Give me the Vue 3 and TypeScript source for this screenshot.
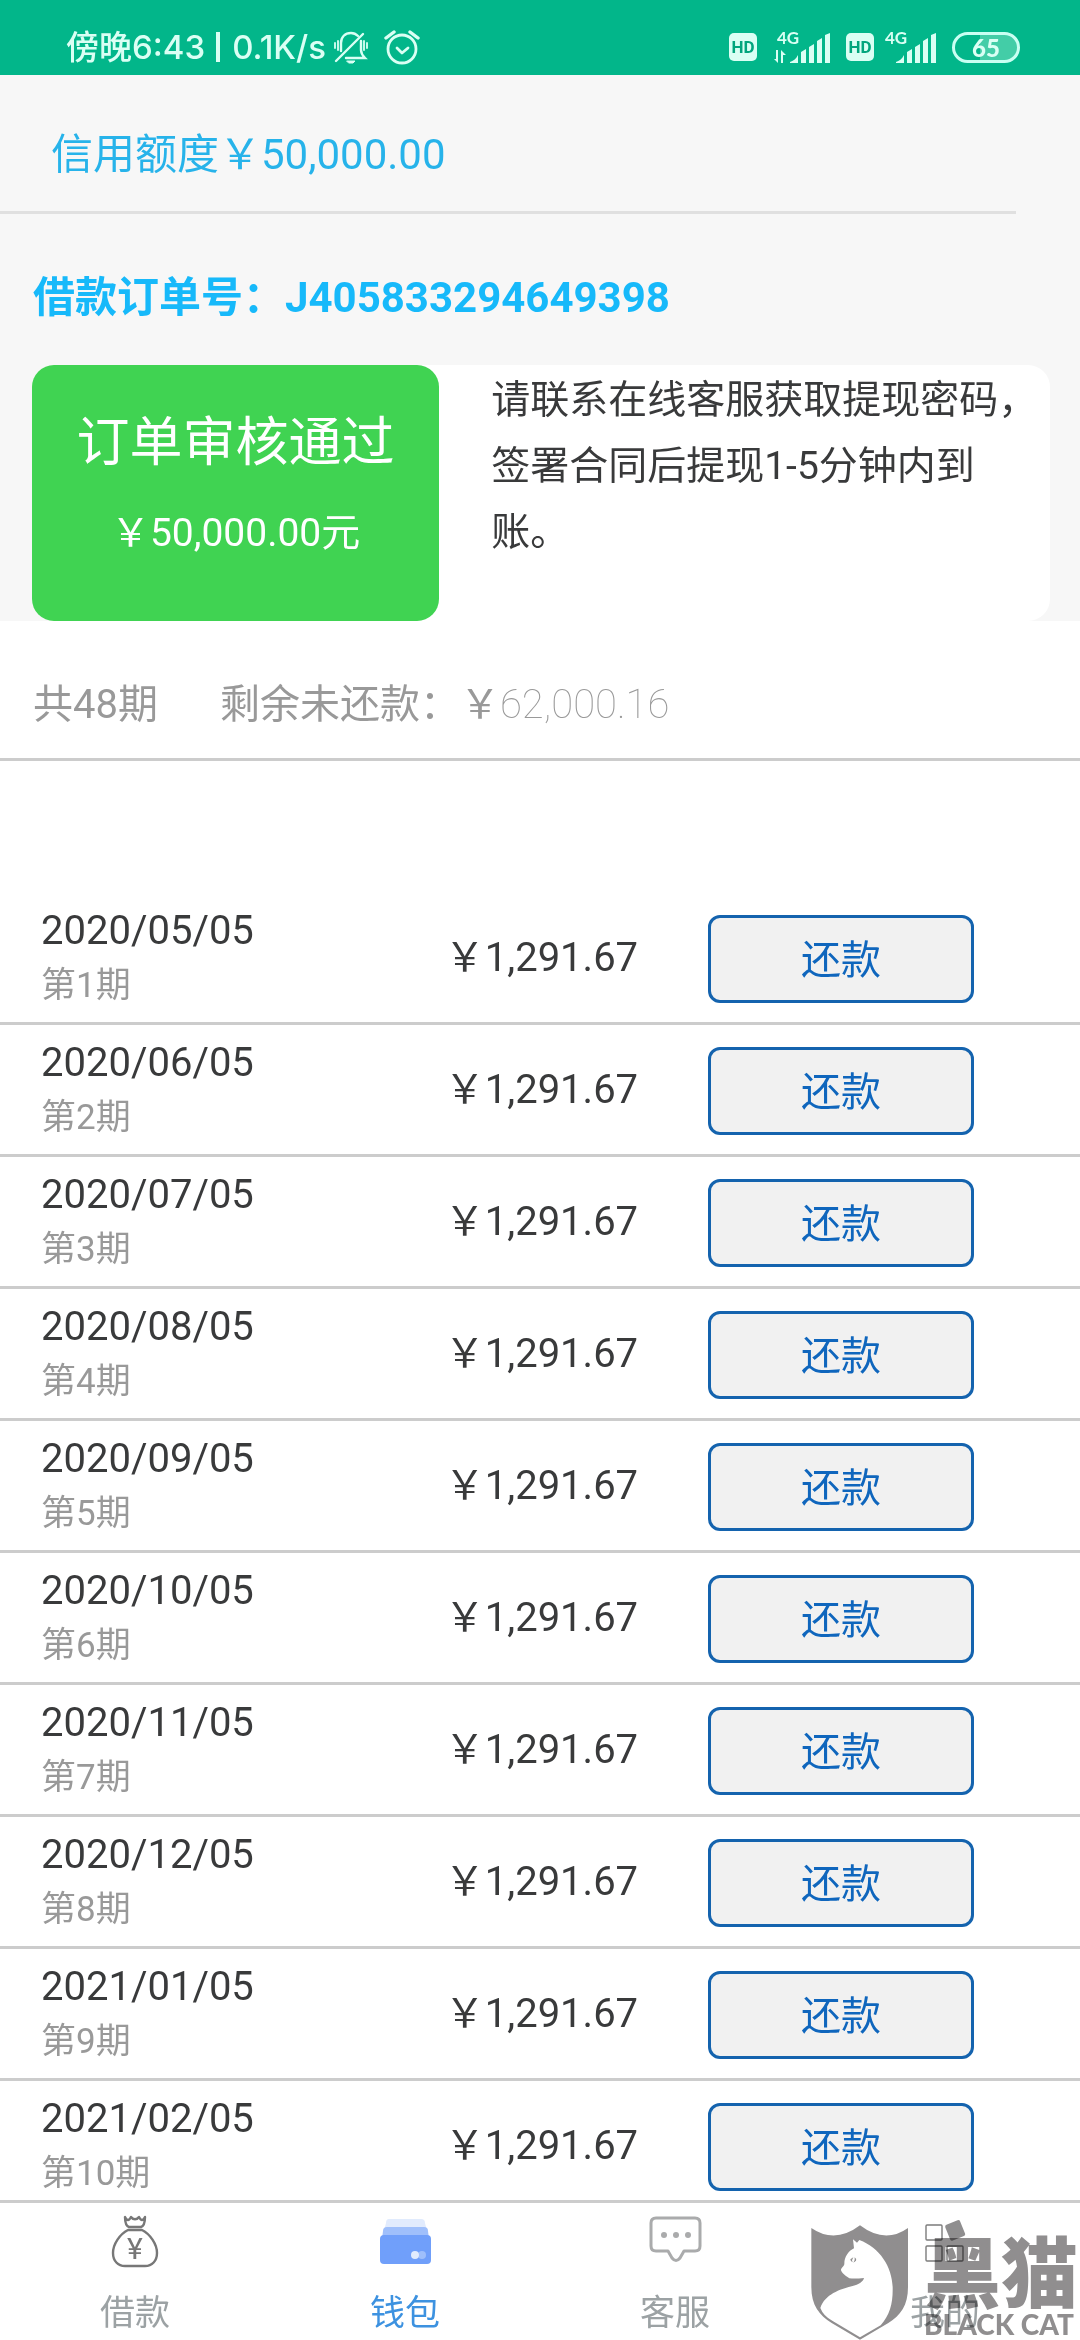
<script setup lang="ts">
interface Instalment {
  date: string
  period: number
}

interface Tab {
  id: string
  label: string
  active?: boolean
}

const amount = '1,291.67'

const instalments: Instalment[] = Array.from({ length: 10 }, (_, i) => {
  const month = 5 + i
  const year = 2020 + Math.floor((month - 1) / 12)
  const mm = String(((month - 1) % 12) + 1).padStart(2, '0')
  return { date: `${year}/${mm}/05`, period: i + 1 }
})

const tabs: Tab[] = [
  { id: 'loan', label: '借款' },
  { id: 'wallet', label: '钱包', active: true },
  { id: 'service', label: '客服' },
  { id: 'mine', label: '我的' },
]
</script>

<template>
  <div class="app">
    <header class="status">
      <div class="status-left">
        <span>傍晚6:43</span>
        <i class="bar"></i>
        <span class="speed">0.1K/s</span>
        <svg class="bell" width="36" height="36" viewBox="0 0 36 36" fill="none" stroke="currentColor" stroke-width="2.4" stroke-linecap="round">
          <path d="M3 32 30 5" />
          <path d="M8 22V14C8 8 12 4 18 4c3 0 5 1 7 3" />
          <path d="M28 12v9c0 3 2 6 4 8H13" />
          <path d="M14 32h8l-2 2h-4z" fill="currentColor" stroke-width="1" />
          <path d="M2 14v5M5 12v9M31 12v9M34 14v5" stroke-width="1.8" />
        </svg>
        <svg width="36" height="36" viewBox="0 0 36 36" fill="none" stroke="currentColor" stroke-width="2.8" stroke-linecap="round" stroke-linejoin="round">
          <circle cx="18" cy="20" r="14" />
          <path d="M2 9 10 3M34 9 26 3" stroke-width="3.4" />
          <path d="m13 19 5 5 6-5" />
        </svg>
      </div>
      <div class="status-right">
        <div class="sim">
          <span class="hd">HD</span>
          <svg width="57" height="42" viewBox="0 -4 57 42" fill="currentColor">
            <text class="net" x="4" y="14">4G</text>
            <path d="M5 20v13L1 29h2V20zM8 33V20l5 5h-3v8z" />
            <path d="M17 32c3-1 6-3 8-7v8h-8zM28 22l5-3v14h-5zM36 17l5-3v19h-5zM44 11l5-3v25h-5zM52 5l5-2v30h-5z" />
          </svg>
        </div>
        <div class="sim tight">
          <span class="hd">HD</span>
          <svg width="52" height="42" viewBox="5 -4 52 42" fill="currentColor">
            <text class="net" x="6" y="14">4G</text>
            <path d="M17 32c3-1 6-3 8-7v8h-8zM28 22l5-3v14h-5zM36 17l5-3v19h-5zM44 11l5-3v25h-5zM52 5l5-2v30h-5z" />
          </svg>
        </div>
        <span class="battery">65</span>
      </div>
    </header>

    <section class="credit">
      <p class="limit">信用额度￥50,000.00</p>
      <h1 class="order">借款订单号：J405833294649398</h1>
      <div class="card">
        <div class="result">
          <strong class="result-title">订单审核通过</strong>
          <span class="result-sum">￥50,000.00元</span>
        </div>
        <p class="note">请联系在线客服获取提现密码，签署合同后提现1-5分钟内到账。</p>
      </div>
    </section>

    <section class="summary">
      <span>共48期</span>
      <span>剩余未还款：￥<span class="thin">62,000.16</span></span>
    </section>

    <main class="list">
      <table class="plan">
        <colgroup>
          <col class="col-date" />
          <col class="col-sum" />
          <col />
        </colgroup>
        <tbody>
          <tr v-for="item in instalments" :key="item.period">
            <td class="when">
              <div class="date">{{ item.date }}</div>
              <div class="period">第{{ item.period }}期</div>
            </td>
            <td class="sum">￥{{ amount }}</td>
            <td><button type="button" class="repay">还款</button></td>
          </tr>
        </tbody>
      </table>
    </main>

    <nav class="tabs">
      <a v-for="tab in tabs" :key="tab.id" href="#" class="tab" :class="{ active: tab.active }">
        <svg v-if="tab.id === 'loan'" width="56" height="56" viewBox="0 0 56 56" fill="none" stroke="#777" stroke-width="2.4" stroke-linejoin="round">
          <path d="M18 4c0 4 1 9 4 10h12c3-1 4-6 4-10-2 4-4 4-6 0-2 3-6 3-8 0-2 4-4 4-6 0z" />
          <path d="M21 17h14c8 4 15 14 15 23 0 8-5 13-12 13H18C11 53 6 48 6 40 6 31 13 21 21 17z" />
          <text class="yen" x="28" y="46" text-anchor="middle">¥</text>
        </svg>
        <svg v-else-if="tab.id === 'wallet'" width="56" height="56" viewBox="0 0 56 56">
          <path d="M12 6h32q4 0 4 4l2 8H7l2-8q0-4 3-4z" fill="#e1ebfd" />
          <path d="M10 14h37q4 0 4 4l1 8H5l1-8q0-4 4-4z" fill="#9fbffb" />
          <rect x="3" y="22" width="51" height="29" rx="4" fill="#709ffa" />
          <circle cx="45" cy="42" r="4" fill="#9fbffb" />
          <circle cx="38" cy="42" r="4" fill="#e1ebfd" />
        </svg>
        <svg v-else-if="tab.id === 'service'" width="56" height="56" viewBox="0 0 56 56" fill="none" stroke="#aaabac" stroke-width="3" stroke-linejoin="round">
          <path d="M9 5h39q5 0 5 5v23q0 5-5 5H37l-4 7q-4 5-8 0l-4-7H9q-5 0-5-5V10q0-5 5-5z" />
          <g fill="#aaabac" stroke="none">
            <circle cx="17" cy="22" r="3" />
            <circle cx="29" cy="22" r="3" />
            <circle cx="41" cy="22" r="3" />
          </g>
        </svg>
        <svg v-else width="56" height="56" viewBox="0 0 56 56" fill="none" stroke="#7c7c7c" stroke-width="1.4">
          <rect x="9" y="12" width="16" height="15" rx="1" />
          <rect x="9" y="33" width="16" height="15" rx="1" />
          <rect x="30" y="33" width="16" height="15" rx="1" />
          <rect x="30" y="9" width="16" height="17" rx="2" fill="#8f8e8f" stroke="none" transform="rotate(-22 38 17)" />
        </svg>
        <span>{{ tab.label }}</span>
      </a>
    </nav>

    <div class="watermark">
      <svg width="98" height="115" viewBox="93 104 294 345">
        <path fill="#908e8f" d="M94 113Q165 162 240 105Q315 162 384 113V290C384 345 362 375 325 398L240 448L155 398C118 375 94 345 94 290Z" />
        <path fill="#fff" d="M121 353C135 312 180 297 215 288C238 282 250 273 252 263Q225 266 208 264C200 258 188 252 183 240C182 232 193 228 193 220C193 200 205 182 222 174L219 147L231 157L238 149C300 172 336 230 338 290C339 340 330 372 302 405L240 441L158 392Q130 377 121 353Z" />
        <path fill="#908e8f" d="M211 207l9-6-4 9 2 6q-7-3-7-9zM224 201q7 5 4 10l-8 6 4-8z" />
      </svg>
      <div class="brand">
        <span class="brand-cn">黑猫</span>
        <span class="brand-en">BLACK CAT</span>
      </div>
    </div>
  </div>
</template>

<style>
body {
  margin: 0;
  background: #fff;
}
</style>

<style scoped>
.app {
  position: relative;
  display: flex;
  flex-direction: column;
  height: 100vh;
  overflow: hidden;
  background: #fff;
  color: #393a3b;
  font-family: Roboto, "Noto Sans CJK SC", sans-serif;
  font-size: 40px;
  line-height: 60px;
}

p,
h1 {
  margin: 0;
}

svg {
  display: block;
  flex: none;
}

.status {
  display: flex;
  flex: none;
  justify-content: space-between;
  align-items: flex-end;
  height: 65px;
  padding: 0 60px 10px 66px;
  background: #02b68a;
  color: #dafff4;
}

.status-left {
  display: flex;
  align-items: center;
  height: 36px;
  font: 500 33px/36px Inter, "Noto Sans CJK SC", sans-serif;
  white-space: nowrap;
}

.bar {
  width: 4px;
  height: 30px;
  margin: 0 12px 0 11px;
  background: currentColor;
}

.bell {
  margin: 0 15px 0 7px;
}

.status-right {
  display: flex;
  align-items: center;
  gap: 16px;
  height: 36px;
}

.sim {
  display: flex;
  align-items: center;
  gap: 16px;
}

.sim.tight {
  gap: 10px;
}

.hd {
  width: 28px;
  border-radius: 5px;
  background: #dafff4;
  color: #02a57d;
  font: 700 17px/28px Roboto, sans-serif;
  text-align: center;
}

.net {
  font: 700 17px Lato, sans-serif;
}

.battery {
  box-sizing: border-box;
  width: 68px;
  height: 31px;
  border: 3px solid #c9fff2;
  border-radius: 16px;
  background: linear-gradient(90deg, #02b68a 40%, #43cda7 40%);
  font: 900 24px/25px Lato, sans-serif;
  text-align: center;
}

.credit {
  flex: none;
  background: #f7f7f7;
}

.limit {
  margin-right: 64px;
  padding: 50px 0 26px 51px;
  border-bottom: 3px solid #e0e0e0;
  color: #27b3ea;
  font-size: 42px;
}

.order {
  padding: 54px 32px 37px 33px;
  color: #17b9fa;
  font-size: 42px;
  font-weight: 700;
}

.card {
  display: flex;
  min-height: 256px;
  margin: 0 30px 0 32px;
  border-radius: 22px;
  background: #fff;
}

.result {
  display: flex;
  flex: 0 0 40%;
  flex-direction: column;
  align-items: center;
  gap: 22px;
  box-sizing: border-box;
  padding-top: 40px;
  border-radius: 22px;
  background: #40d352;
  color: #fff;
}

.result-title {
  font-size: 53px;
  font-weight: 400;
  line-height: 76px;
}

.result-sum {
  font-size: 39px;
}

.note {
  flex: 1;
  padding: 2px 0 0 52px;
  font-size: 39px;
  line-height: 66px;
}

.summary {
  display: flex;
  flex: none;
  gap: 62px;
  padding: 54px 33px 23px;
  border-bottom: 3px solid #ccc;
  color: #999;
}

.thin {
  font-weight: 100;
}

.list {
  flex: 1;
  min-height: 0;
  overflow: hidden;
  padding-top: 132px;
}

.plan {
  width: 100%;
  border-spacing: 0;
  table-layout: fixed;
}

.col-date {
  width: 41%;
}

.col-sum {
  width: 24%;
}

.plan td {
  height: 129px;
  padding: 0;
  border-bottom: 3px solid #ccc;
  vertical-align: middle;
  white-space: nowrap;
}

.plan .when {
  padding-left: 41px;
}

.plan .sum {
  padding-left: 2px;
}

.date {
  line-height: 55px;
}

.period {
  color: #999;
  font-size: 35px;
  line-height: 55px;
}

.repay {
  display: block;
  box-sizing: border-box;
  width: 266px;
  height: 88px;
  margin: 2px 0 0 6px;
  padding: 4px 0 0;
  border: 3px solid #1463ae;
  border-radius: 12px;
  background: #f1f1f1;
  color: #0f66bd;
  font: inherit;
}

.tabs {
  display: flex;
  flex: none;
  border-top: 3px solid #ccc;
  background: #fff;
}

.tab {
  display: flex;
  flex: 1;
  flex-direction: column;
  align-items: center;
  gap: 20px;
  padding: 10px 0 1px;
  color: #9ca2a4;
  font-size: 35px;
  line-height: 50px;
  text-decoration: none;
}

.tab.active {
  color: #3d92e0;
}

.yen {
  fill: #777;
  stroke: none;
  font: 400 30px Roboto, sans-serif;
}

.watermark {
  position: absolute;
  right: 0;
  bottom: 0;
  display: flex;
  gap: 15px;
  width: 269px;
  height: 115px;
  mix-blend-mode: multiply;
  color: #908e8f;
  pointer-events: none;
}

.brand {
  display: flex;
  flex-direction: column;
  white-space: nowrap;
}

.brand-cn {
  font: 900 77px/88px "Noto Sans CJK SC", sans-serif;
}

.brand-en {
  font: 900 28px/22px Lato, sans-serif;
}
</style>
